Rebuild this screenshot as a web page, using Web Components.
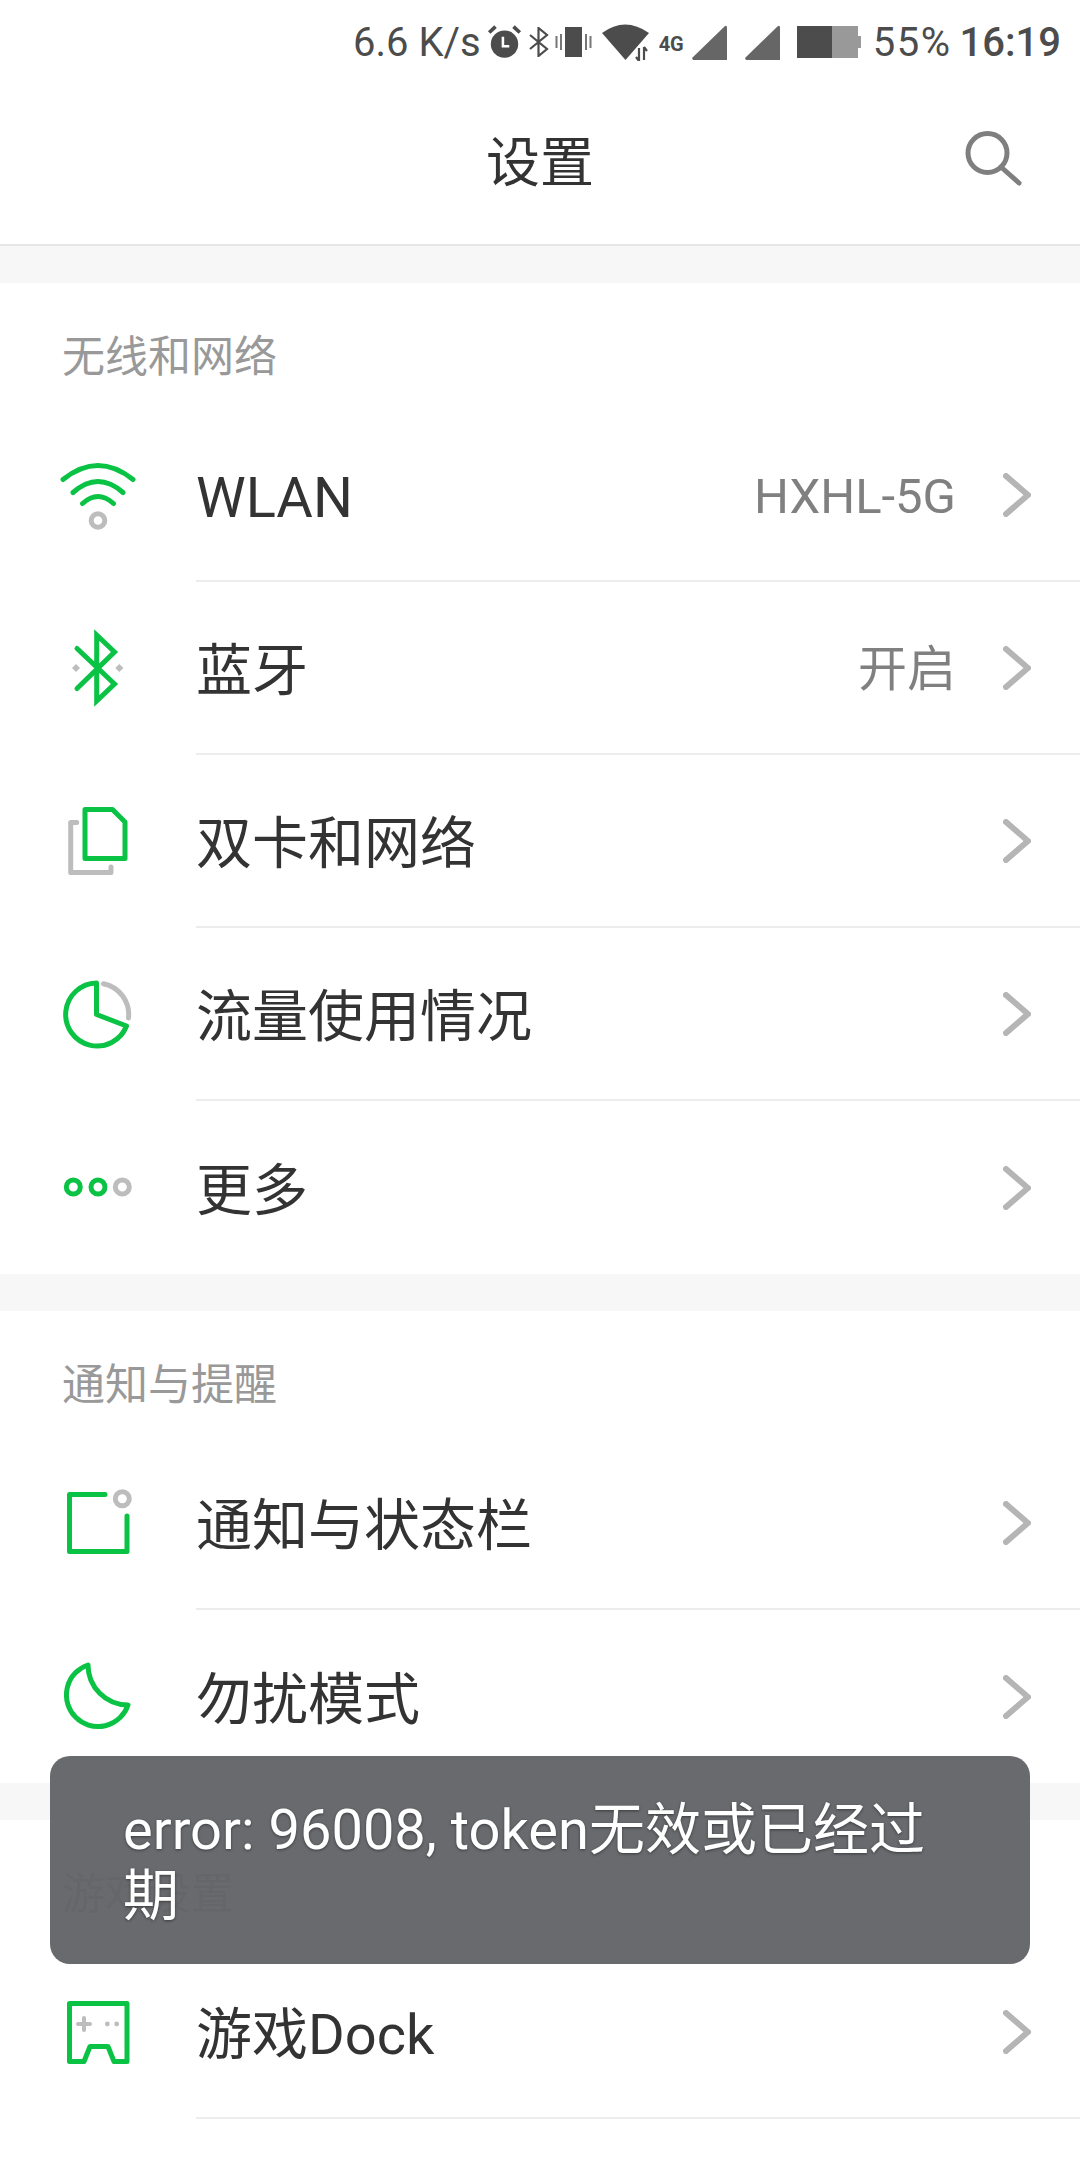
<!DOCTYPE html>
<html lang="zh-CN"><head><meta charset="utf-8"><title>设置</title>
<style>
html,body{margin:0;padding:0;background:#f7f7f7}
body{width:1080px;height:2160px;overflow:hidden;position:relative;font-family:Roboto,"Noto Sans CJK SC",sans-serif}
settings-section:last-of-type{margin-bottom:0;padding-bottom:42px}
</style></head><body>
<phone-status></phone-status>
<app-header title-text="设置"></app-header>
<settings-section label="无线和网络">
  <settings-row label="WLAN" value="HXHL-5G"><set-icon slot="icon" name="wifi"></set-icon></settings-row>
  <settings-row label="蓝牙" value="开启"><set-icon slot="icon" name="bt"></set-icon></settings-row>
  <settings-row label="双卡和网络"><set-icon slot="icon" name="sim"></set-icon></settings-row>
  <settings-row label="流量使用情况"><set-icon slot="icon" name="pie"></set-icon></settings-row>
  <settings-row label="更多" last><set-icon slot="icon" name="more"></set-icon></settings-row>
</settings-section>
<settings-section label="通知与提醒">
  <settings-row label="通知与状态栏"><set-icon slot="icon" name="notify"></set-icon></settings-row>
  <settings-row label="勿扰模式" last><set-icon slot="icon" name="moon"></set-icon></settings-row>
</settings-section>
<settings-section label="游戏设置">
  <settings-row label="游戏Dock"><set-icon slot="icon" name="dock"></set-icon></settings-row>
</settings-section>
<toast-message>error: 96008, token无效或已经过期</toast-message>
<script>
const G='#0ac244',H='#bdbdbd';
const ICONS={
wifi:`<g stroke="${G}"><path d="M5 24.5Q40 -3.5 75 24.5M15 37.5Q40 15.5 65 37.5M24.5 48.5Q40 34.5 55.5 48.5"/></g><circle cx="40" cy="65.5" r="6.8" stroke="${H}"/>`,
bt:`<path stroke="${G}" stroke-linejoin="miter" d="M19 20.5L56.5 56 38.7 73V7L56.5 24 19 60.5"/><path fill="${H}" stroke="none" d="M18 36l4 4-4 4-4-4zM61.3 36l4 4-4 4-4-4z"/>`,
sim:`<path stroke="${G}" d="M27 8.4H54.5L67 21V57.4H27Z"/><path stroke="${H}" d="M18.7 21.6H12.7V71.6H53V66"/>`,
pie:`<path stroke="${G}" d="M38.5 9V40.5L68.5 52A31.5 31.5 0 1 1 38.5 9Z"/><path stroke="${H}" d="M45.5 9.7A31.5 31.5 0 0 1 70.5 44"/>`,
more:`<circle cx="15.3" cy="40" r="7" stroke="${G}"/><circle cx="40" cy="40" r="7" stroke="${G}"/><circle cx="64.3" cy="40" r="7" stroke="${H}"/>`,
notify:`<path stroke="${G}" d="M47 11.6H11.5V68.5H69V33"/><circle cx="64.3" cy="15.7" r="7" stroke="${H}"/>`,
moon:`<path stroke="${G}" d="M30 9A31.6 31.6 0 1 0 70 49A40 40 0 0 1 30 9Z"/>`,
dock:`<path stroke="${G}" d="M11.5 11.5H69V69.5H56L50 54.5H32L26 69.5H11.5Z"/><path stroke="${H}" stroke-width="4" d="M20 32H32M26 26V38"/><circle cx="49.3" cy="32" r="2.4" fill="${H}" stroke="none"/><circle cx="58.7" cy="32" r="2.4" fill="${H}" stroke="none"/>`
};
class SetIcon extends HTMLElement{connectedCallback(){
  const r=this.shadowRoot||this.attachShadow({mode:'open'});
  r.innerHTML=`<style>:host{display:block;width:80px;height:80px}svg{display:block}</style><svg width="80" height="80" viewBox="0 0 80 80" fill="none" stroke-width="5" stroke-linecap="round" stroke-linejoin="round">${ICONS[this.getAttribute('name')]||''}</svg>`;
}}
customElements.define('set-icon',SetIcon);

class PhoneStatus extends HTMLElement{constructor(){super();
  this.attachShadow({mode:'open'}).innerHTML=`<style>
  :host{display:flex;height:84px;background:#fff;align-items:center;justify-content:flex-end;padding:0 19px 0 0;box-sizing:border-box;color:#4c4c4c;font:40px/84px Roboto,sans-serif}
  svg{display:block;flex:none}
  .t{white-space:nowrap;position:relative;top:1px}
  .g4{font:700 20px/20px Roboto,sans-serif;align-self:flex-start;margin:34px 8px 0 8px}
  .p{letter-spacing:1.5px}
  .c{font-weight:500;margin-left:8px}
  </style>
  <span class="t" style="margin-right:6px">6.6 K/s</span>
  <svg width="35" height="38" viewBox="0 0 33 36" style="margin-right:6px"><circle cx="16.5" cy="20" r="13" fill="#4c4c4c"/><path d="M2 9 8 3.5M31 9 25 3.5" stroke="#4c4c4c" stroke-width="3.5"/><path d="M15 13v9h6" stroke="#fff" stroke-width="2.4" fill="none"/></svg>
  <svg width="21" height="30" viewBox="0 0 21 30" style="margin-right:6px"><path d="M2 8 19 22 10.5 29V1L19 8 2 22" fill="none" stroke="#4c4c4c" stroke-width="2.2"/></svg>
  <svg width="37" height="32" viewBox="0 0 37 32" style="margin-right:10px"><rect x="10" y="1" width="17" height="30" fill="#4c4c4c"/><path d="M1.5 10v12M6 8v16M31 8v16M35.5 10v12" stroke="#777" stroke-width="2"/></svg>
  <svg width="49" height="38" viewBox="0 0 49 38"><path d="M0 10Q23 -7 47 10L23.500 37Z" fill="#4c4c4c"/><path d="M37 25v13M37 38l-3-4M42 37V24M42 24l3 4" stroke="#4c4c4c" stroke-width="2.2" fill="none"/></svg>
  <span class="g4">4G</span>
  <svg width="36" height="35" viewBox="0 0 36 35" style="margin-right:17px"><path d="M0 33 33 1Q35 0 35 3V35H1Z" fill="#666"/></svg>
  <svg width="36" height="35" viewBox="0 0 36 35" style="margin-right:16px"><path d="M0 33 33 1Q35 0 35 3V35H1Z" fill="#666"/></svg>
  <svg width="65" height="32" viewBox="0 0 65 32" style="margin-right:11px"><rect width="35" height="32" fill="#4c4c4c"/><rect x="35" width="26" height="32" fill="#999"/><rect x="61" y="10" width="3" height="12" fill="#999"/></svg>
  <span class="t p">55%</span><span class="t c">16:19</span>`;
}}
customElements.define('phone-status',PhoneStatus);

class AppHeader extends HTMLElement{connectedCallback(){
  const r=this.shadowRoot||this.attachShadow({mode:'open'});
  r.innerHTML=`<style>
  :host{display:grid;grid-template-columns:1fr auto 1fr;align-items:center;height:162px;box-sizing:border-box;background:#fff;border-bottom:2px solid #e6e6e6;margin-bottom:37px}
  h1{grid-column:2;margin:0;font:400 54px/64px Roboto,"Noto Sans CJK SC",sans-serif;color:#333}
  svg{justify-self:end;margin:0 58px 10px 0;display:block}
  </style><h1>${this.getAttribute('title-text')}</h1>
  <svg width="58" height="56" viewBox="0 0 58 56" fill="none" stroke="#7f7f7f" stroke-width="5" stroke-linecap="round"><circle cx="23.5" cy="22" r="19.5"/><path d="M37 36 55 52"/></svg>`;
}}
customElements.define('app-header',AppHeader);

class SettingsSection extends HTMLElement{connectedCallback(){
  const r=this.shadowRoot||this.attachShadow({mode:'open'});
  r.innerHTML=`<style>
  :host{display:block;background:#fff;margin-bottom:37px}
  .l{box-sizing:border-box;height:126px;padding:44px 0 0 62px;font:400 43px/60px Roboto,"Noto Sans CJK SC",sans-serif;color:#999}
  </style><div class="l">${this.getAttribute('label')}</div><slot></slot>`;
}}
customElements.define('settings-section',SettingsSection);

class SettingsRow extends HTMLElement{connectedCallback(){
  const r=this.shadowRoot||this.attachShadow({mode:'open'});
  const v=this.getAttribute('value'), l=this.getAttribute('label');
  r.innerHTML=`<style>
  :host{display:flex;height:173px;background:#fff;align-items:stretch}
  .i{width:196px;flex:none;display:flex;align-items:center;padding:0 0 1px 58px;box-sizing:border-box}
  .b{flex:1;display:flex;align-items:center;box-sizing:border-box;border-bottom:${this.hasAttribute('last')?'0':'2px solid #ececec'};padding-right:49px}
  .n{flex:1;font:400 56px/70px Roboto,"Noto Sans CJK SC",sans-serif;color:#333;white-space:nowrap;position:relative;top:3px}
  .v{font:400 49px/60px Roboto,"Noto Sans CJK SC",sans-serif;color:#808080;margin-right:47px;position:relative;top:2px}
  svg{display:block}
  </style><div class="i"><slot name="icon"></slot></div><div class="b"><span class="n">${l}</span>${v?`<span class="v">${v}</span>`:''}<svg width="28" height="44" viewBox="0 0 28 44" fill="none" stroke="#b5b5b5" stroke-width="6" stroke-linecap="round" stroke-linejoin="miter"><path d="M3 3 25 22 3 41"/></svg></div>`;
}}
customElements.define('settings-row',SettingsRow);

class ToastMessage extends HTMLElement{constructor(){super();
  this.attachShadow({mode:'open'}).innerHTML=`<style>
  :host{position:absolute;left:50px;top:1756px;width:980px;height:208px;box-sizing:border-box;padding:41px 74px 0 73px;border-radius:20px;background:rgba(99,100,104,.96);color:#fff;font:400 56px/66px Roboto,"Noto Sans CJK SC",sans-serif;text-shadow:0 1px 3px rgba(0,0,0,.45)}
  </style><slot></slot>`;
}}
customElements.define('toast-message',ToastMessage);
</script>
</body></html>
